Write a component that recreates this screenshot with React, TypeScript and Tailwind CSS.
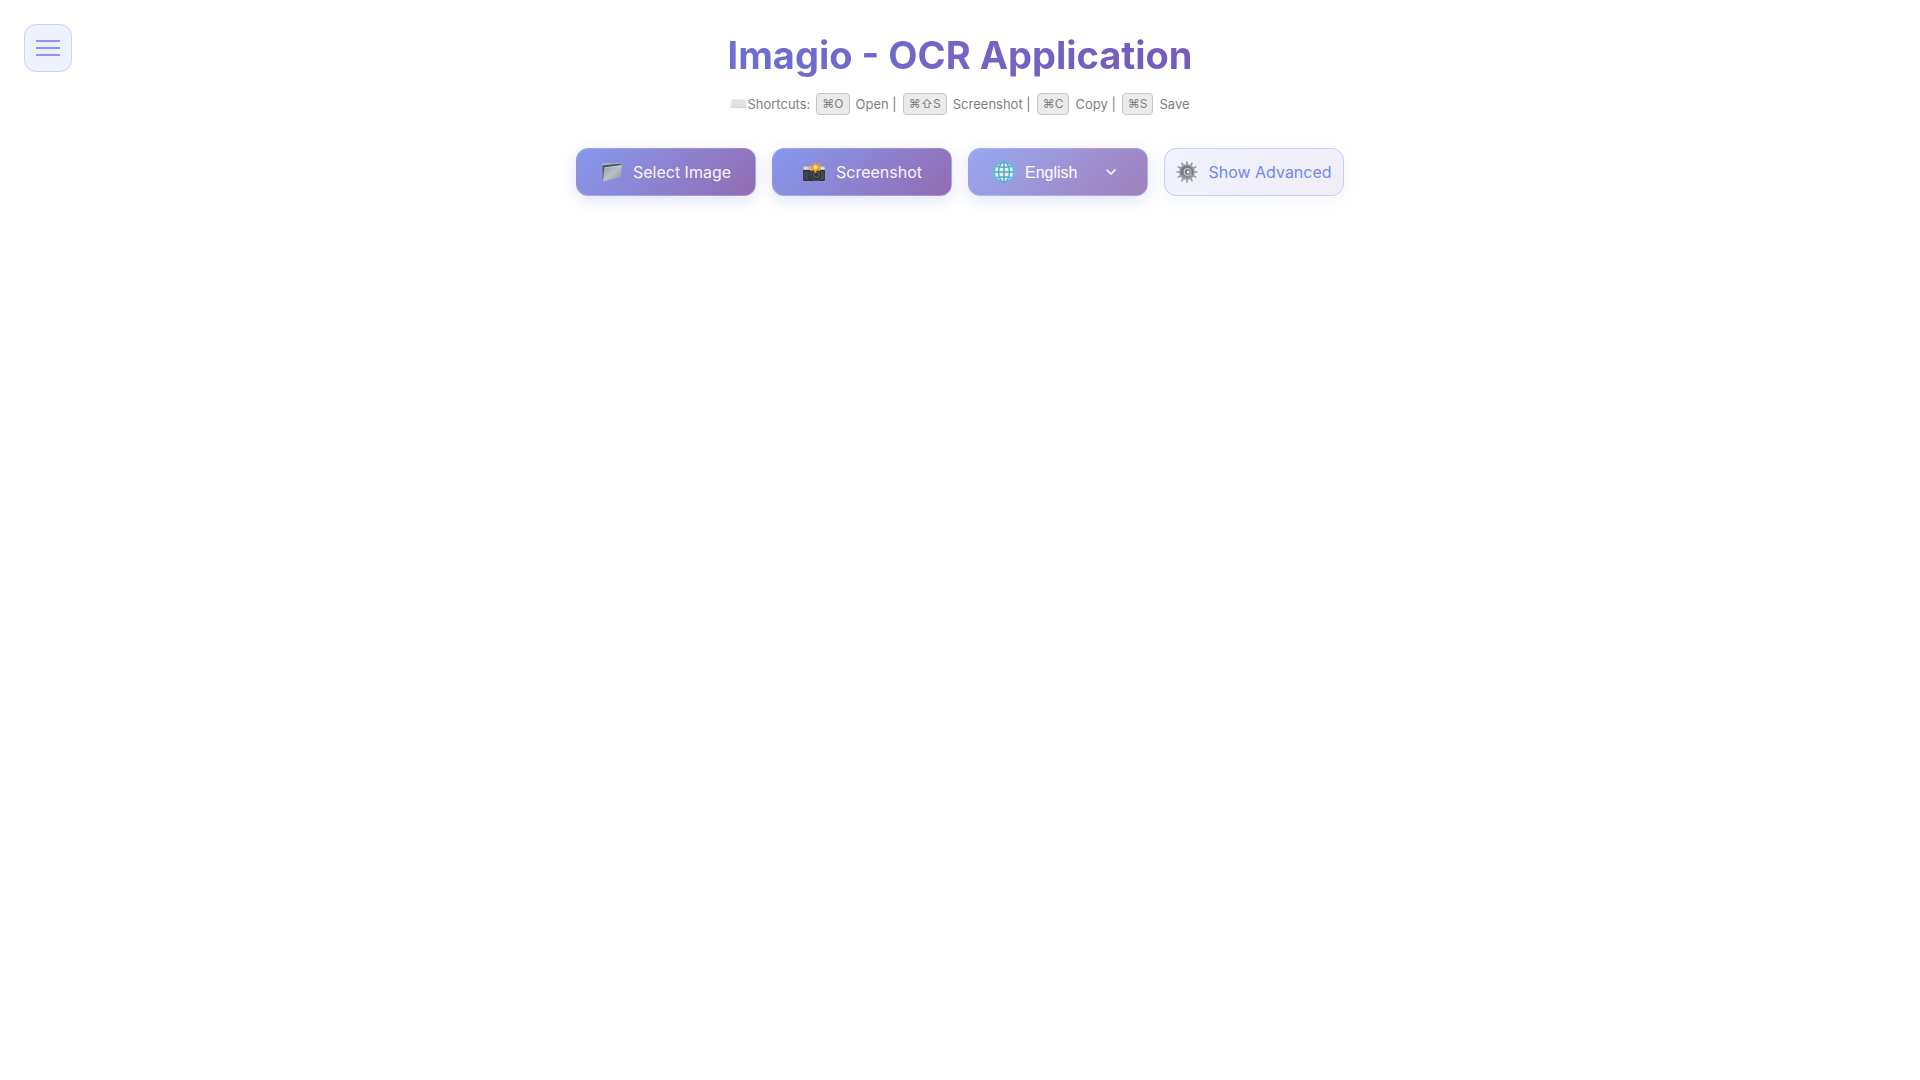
import React from "react";

function KeyboardIcon() {
  return (
    <svg viewBox="0 0 17 10" className="h-[10px] w-[17px]" aria-hidden="true">
      <path d="M2 0.5h13l1.8 7.4q0.1 1.1-1 1.1H1.2q-1.1 0-1-1.1z" fill="#dcdcdd" />
      <path d="M2.3 2.4h12.4M1.9 4.2h13.2M1.5 6h14" stroke="#eaeaea" strokeWidth="0.9" strokeDasharray="1.2 0.4" />
      <path d="M0.4 8.6h16.2" stroke="#cfcfd0" strokeWidth="0.6" />
    </svg>
  );
}

function FolderIcon() {
  return (
    <svg viewBox="0 0 22 22" className="size-[22px] shrink-0" aria-hidden="true">
      <defs>
        <linearGradient id="folderFront" x1="0" y1="0" x2="1" y2="1">
          <stop offset="0" stopColor="#8f979f" />
          <stop offset="0.5" stopColor="#bcc0c6" />
          <stop offset="1" stopColor="#8d939c" />
        </linearGradient>
      </defs>
      <path d="M1.2 3.2 2 2l6.3-.6.9 1L20 1.6l.4 3-19 12z" fill="#a6b0bc" />
      <path d="M1.5 4.4 20 2.4l-.3 3L2.6 18.6 1.6 19z" fill="#44576a" />
      <path d="M3.2 7.2q.1-.8.9-.9L20 4.2q.9-.1.8.8l-.9 10.4q-.1.8-.8.9L2.9 20.2q-1 .2-.9-.8z" fill="url(#folderFront)" />
      <path d="M3.4 7 20.4 4.7" stroke="#d6dbe0" strokeWidth="0.6" />
    </svg>
  );
}

function CameraIcon() {
  return (
    <svg viewBox="0 0 24 20" className="h-5 w-6 shrink-0" aria-hidden="true">
      <path d="M3 3h4v2H3zM17 2.5h5V5h-5z" fill="#8d8f94" />
      <rect x="1" y="4" width="22" height="15" rx="1.2" fill="#34353a" />
      <path d="M1 8V5q0-1 1-1h20q1 0 1 1v3z" fill="#b9bbbf" />
      <path d="M1.5 9.5h5v8h-5zM18.5 9.5h4v8h-4z" fill="#45464b" />
      <path d="M2.5 5.5h3V7h-3zM19 5.5h3V7h-3z" fill="#ebecee" />
      <circle cx="14.5" cy="12.8" r="6" fill="#54575b" />
      <circle cx="14.5" cy="12.8" r="4.9" fill="#24272b" />
      <circle cx="14.5" cy="12.8" r="3.5" fill="#58616a" />
      <circle cx="14.5" cy="12.8" r="2.3" fill="#30363d" />
      <path d="m13.5 0 1.2 3 3.2-2-.7 3.2 1.8.8-2 1 1.2 3.5-3.1-1.3L13 11.4l-1.2-3.2L8 9.2l1.9-3L8 4l3 .1-.2-2.5 1.8 1.3z" fill="#fa9b1e" />
      <circle cx="13.5" cy="5.2" r="2.3" fill="#ffd463" />
      <circle cx="13.5" cy="5.2" r="1" fill="#fff3c2" />
    </svg>
  );
}

function GlobeIcon() {
  return (
    <svg viewBox="0 0 22 22" className="size-[22px] shrink-0" aria-hidden="true">
      <circle cx="11" cy="11" r="10" fill="#e9edf3" stroke="#5cc0dc" strokeWidth="1.7" />
      <g fill="none" stroke="#55abc8" strokeWidth="1.5">
        <ellipse cx="11" cy="11" rx="5.5" ry="10" />
        <path d="M11 1v20M1 11h20M3 5.2q8 2.2 16 0M3 16.8q8-2.2 16 0" />
      </g>
    </svg>
  );
}

const teeth = [0, 30, 60, 90, 120, 150, 180, 210, 240, 270, 300, 330];

function GearIcon() {
  return (
    <svg viewBox="0 0 22 22" className="size-[22px] shrink-0" aria-hidden="true">
      {teeth.map((a) => (
        <path key={a} d="M10 4 10.4.2h1.2L12 4z" fill="#8f9599" transform={`rotate(${a} 11 11)`} />
      ))}
      <circle cx="11" cy="11" r="8" fill="#a9adb1" />
      <circle cx="11" cy="11" r="6.8" fill="#777c81" />
      <path d="M5.8 13.6a5.8 5.8 0 0 0 10.4-.4" fill="none" stroke="#989da1" strokeWidth="1.4" />
      <circle cx="11.6" cy="11" r="3.9" fill="#c3c7ca" />
      <circle cx="11.8" cy="11" r="2.8" fill="#6a6f74" />
      <circle cx="12.1" cy="11" r="1.5" fill="#eceef0" />
    </svg>
  );
}

function Key({ children }: { children: React.ReactNode }) {
  return (
    <kbd className="mr-1.5 ml-[6px] inline-flex h-[22px] items-center rounded-[4px] border border-[#c4c4c4] bg-[#ebebeb] px-[5px] font-[Inter,sans-serif] text-[12px]">
      {children}
    </kbd>
  );
}

const primary =
  "flex h-12 w-[180px] items-center justify-center gap-2.5 rounded-xl border border-white/20 bg-linear-135 from-[#8599ee] to-[#916bb2] text-base text-white/95 shadow-[0_4px_15px_rgba(102,126,234,0.2)]";

export default function App() {
  return (
    <div className="min-h-screen bg-white font-[Inter,sans-serif]">
      <button
        type="button"
        aria-label="Open menu"
        className="absolute top-6 left-6 flex size-12 flex-col items-center justify-center gap-[5px] rounded-xl border border-[#c9d2f8] bg-[#eef1fd]"
      >
        <span className="h-0.5 w-6 bg-[#8598ee]" />
        <span className="h-0.5 w-6 bg-[#8598ee]" />
        <span className="h-0.5 w-6 bg-[#8598ee]" />
      </button>
      <main className="mx-auto flex flex-col items-center px-8 pt-8">
        <h1 className="w-full max-w-[1200px] bg-linear-135 from-[#667eea] to-[#764ba2] bg-clip-text text-center text-[38px] leading-[46px] font-bold text-transparent">
          Imagio - OCR Application
        </h1>
        <p className="mt-[15px] flex h-[22px] items-center text-[13px] text-[#808080]">
          <KeyboardIcon />
          <span className="pt-0.5">Shortcuts:</span>
          <Key>⌘O</Key>
          <span className="pt-0.5">Open |</span>
          <Key>⌘⇧S</Key>
          <span className="pt-0.5">Screenshot |</span>
          <Key>⌘C</Key>
          <span className="pt-0.5">Copy |</span>
          <Key>⌘S</Key>
          <span className="pt-0.5">Save</span>
        </p>
        <div className="mt-[33px] flex flex-wrap justify-center gap-4">
          <button type="button" className={primary}>
            <FolderIcon />
            Select Image
          </button>
          <button type="button" className={primary}>
            <CameraIcon />
            Screenshot
          </button>
          <div className="flex h-12 w-[180px] items-center rounded-xl border border-white/20 bg-linear-135 from-[#97a8f1] to-[#a07fbb] pl-6 shadow-[0_4px_15px_rgba(102,126,234,0.2)]">
            <GlobeIcon />
            <select
              aria-label="Language"
              className="h-full min-w-0 flex-1 appearance-none bg-transparent pt-0.5 pl-2.5 font-['Liberation_Sans',sans-serif] text-base text-white outline-none"
            >
              <option>English</option>
            </select>
            <svg viewBox="0 0 12 8" className="pointer-events-none mr-[30px] h-2 w-3" fill="none" stroke="white" strokeWidth="1.6" strokeLinecap="round" strokeLinejoin="round" aria-hidden="true">
              <path d="m2 2 4 4 4-4" />
            </svg>
          </div>
          <button
            type="button"
            className="flex h-12 w-[180px] items-center justify-center gap-2.5 rounded-xl border border-[#c4cef8] bg-linear-135 from-[#f0f2fd] to-[#f1edf6] text-base whitespace-nowrap text-[#7088ec] shadow-[0_4px_15px_rgba(102,126,234,0.08)]"
          >
            <GearIcon />
            Show Advanced
          </button>
        </div>
      </main>
    </div>
  );
}
